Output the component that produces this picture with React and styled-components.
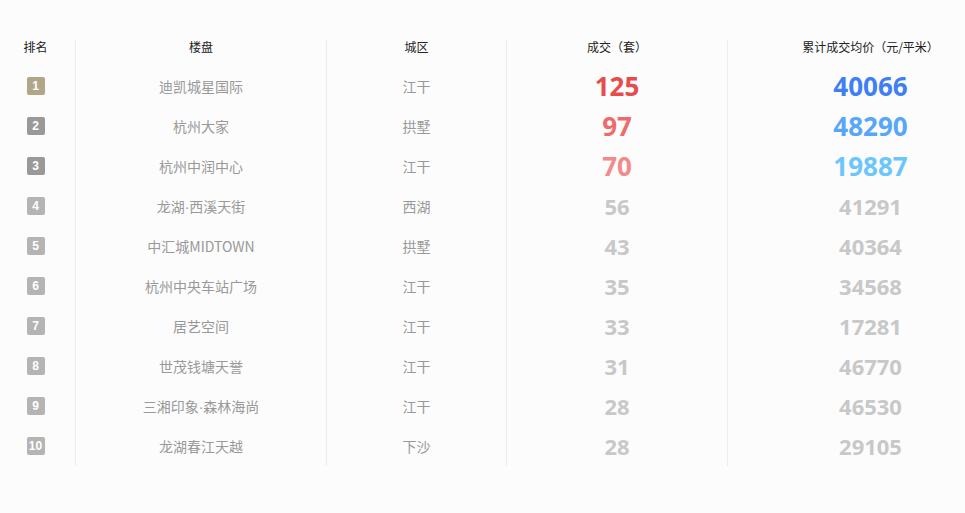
import styled, { createGlobalStyle } from "styled-components";

const GlobalStyle = createGlobalStyle`
  html, body {
    margin: 0;
    padding: 0;
    background: #fcfcfc;
  }
  body {
    font-family: "Noto Sans CJK SC", "Noto Sans", sans-serif;
  }
`;

const Page = styled.div`
  width: 965px;
  height: 513px;
  padding-top: 40px;
  box-sizing: border-box;
  background: #fcfcfc;
`;

const Table = styled.div`
  display: grid;
  grid-template-columns: 75px 251px 180px 221px 238px;
`;

const Column = styled.div`
  display: flex;
  flex-direction: column;
  border-left: ${(p) => (p.$first ? "none" : "1px solid #ececec")};
  padding-left: ${(p) => p.$padL || 0}px;
  padding-right: ${(p) => p.$padR || 0}px;
`;

const Head = styled.div`
  height: 26px;
  font-size: 12px;
  line-height: 14px;
  color: #222;
  text-align: center;
  white-space: nowrap;
`;

const Cell = styled.div`
  height: 40px;
  display: flex;
  align-items: center;
  justify-content: center;
`;

const Badge = styled.span`
  width: 18px;
  height: 18px;
  border-radius: 2px;
  background: ${(p) => p.$bg};
  color: #fff;
  font-family: "Liberation Sans", Arial, sans-serif;
  font-weight: bold;
  font-size: 12px;
  line-height: 18px;
  text-align: center;
`;

const Text = styled.span`
  font-size: 14px;
  color: #999;
  white-space: nowrap;
`;

const Dot = styled.span`
  font-family: "Liberation Sans", Arial, sans-serif;
`;

const Num = styled.span`
  font-family: "Open Sans", "Liberation Sans", sans-serif;
  font-weight: 700;
  font-size: ${(p) => (p.$top ? 26 : 22)}px;
  color: ${(p) => p.$color};
`;

const rows = [
  ["迪凯城星国际", "江干", 125, 40066],
  ["杭州大家", "拱墅", 97, 48290],
  ["杭州中润中心", "江干", 70, 19887],
  ["龙湖·西溪天街", "西湖", 56, 41291],
  ["中汇城MIDTOWN", "拱墅", 43, 40364],
  ["杭州中央车站广场", "江干", 35, 34568],
  ["居艺空间", "江干", 33, 17281],
  ["世茂钱塘天誉", "江干", 31, 46770],
  ["三湘印象·森林海尚", "江干", 28, 46530],
  ["龙湖春江天越", "下沙", 28, 29105],
];

const badgeBg = ["#b2a68a", "#999999", "#999999"];
const dealColor = ["#e74c4c", "#ef6b6b", "#f28a8a"];
const priceColor = ["#3f7ff5", "#58a6f8", "#6cc6fb"];
const GREY = "#c8c8c8";

const Name = ({ value }) => {
  const parts = value.split("·");
  return (
    <Text>
      {parts.map((part, i) => (
        <span key={i}>
          {i > 0 && <Dot>·</Dot>}
          {part}
        </span>
      ))}
    </Text>
  );
};

export default function App() {
  return (
    <Page>
      <GlobalStyle />
      <Table>
        <Column $first $padR={4}>
          <Head>排名</Head>
          {rows.map((r, i) => (
            <Cell key={i}>
              <Badge $bg={badgeBg[i] || "#b4b4b4"}>{i + 1}</Badge>
            </Cell>
          ))}
        </Column>
        <Column>
          <Head>楼盘</Head>
          {rows.map((r, i) => (
            <Cell key={i}>
              <Name value={r[0]} />
            </Cell>
          ))}
        </Column>
        <Column>
          <Head>城区</Head>
          {rows.map((r, i) => (
            <Cell key={i}>
              <Text>{r[1]}</Text>
            </Cell>
          ))}
        </Column>
        <Column>
          <Head>成交（套）</Head>
          {rows.map((r, i) => (
            <Cell key={i}>
              <Num $top={i < 3} $color={dealColor[i] || GREY}>{r[2]}</Num>
            </Cell>
          ))}
        </Column>
        <Column $padL={48}>
          <Head>累计成交均价（元/平米）</Head>
          {rows.map((r, i) => (
            <Cell key={i}>
              <Num $top={i < 3} $color={priceColor[i] || GREY}>{r[3]}</Num>
            </Cell>
          ))}
        </Column>
      </Table>
    </Page>
  );
}
